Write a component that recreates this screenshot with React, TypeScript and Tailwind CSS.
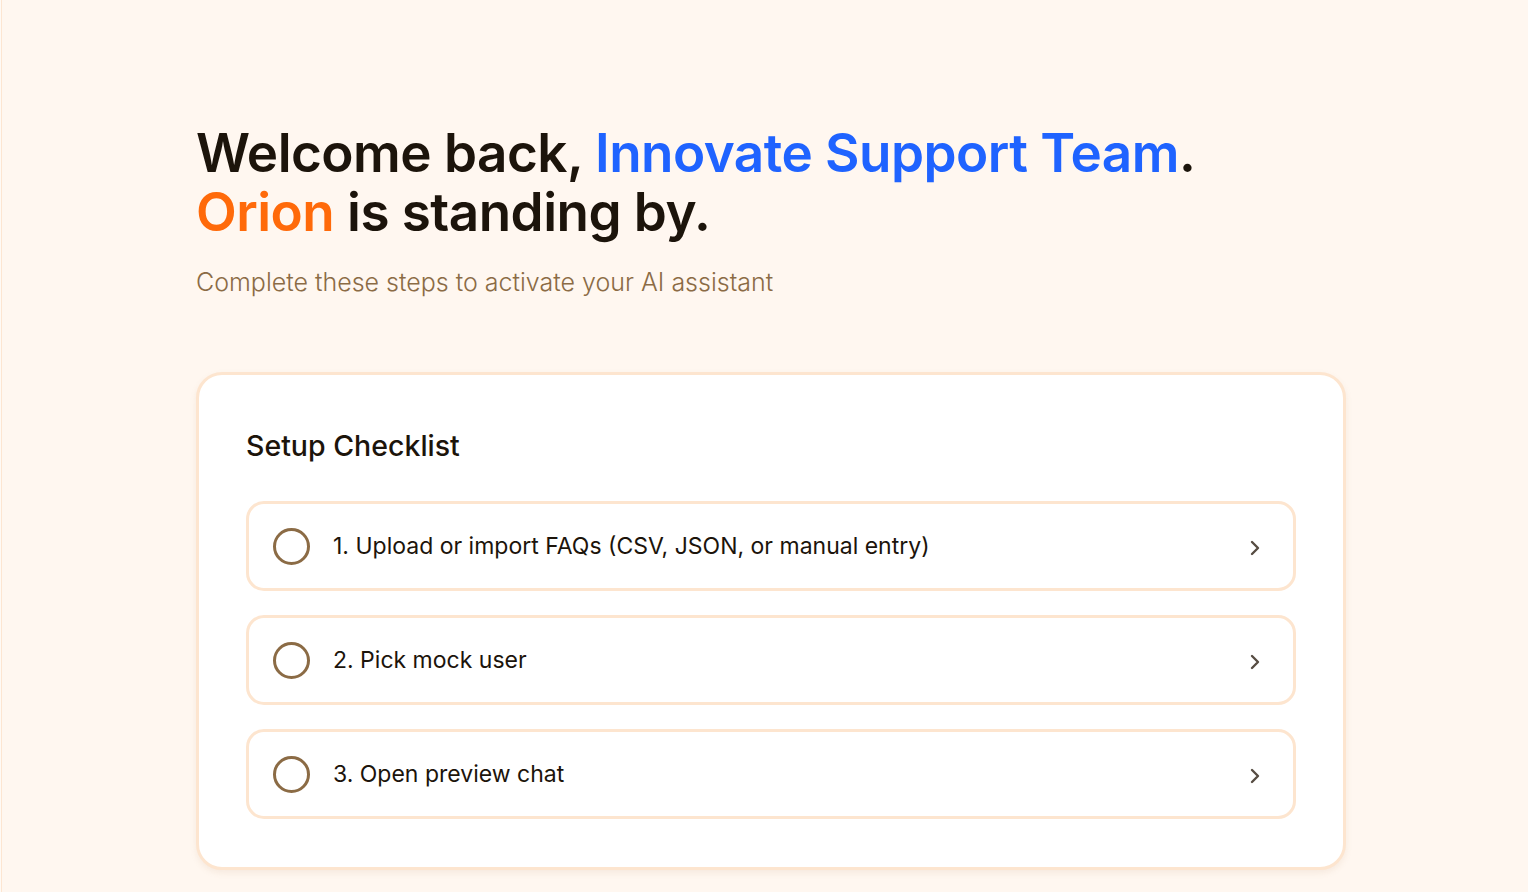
import { ChevronRight } from "lucide-react";

const steps = [
  "1. Upload or import FAQs (CSV, JSON, or manual entry)",
  "2. Pick mock user",
  "3. Open preview chat",
];

export default function App() {
  return (
    <div
      className="flex min-h-screen bg-[#fff7f0]"
      style={{ fontFamily: "Inter, 'Noto Sans', sans-serif" }}
    >
      <div className="w-[2px] shrink-0 bg-[#fffaf5] border-r border-[#fde6d2]" />
      <main className="flex-1 pl-[194px] pr-[180px] pt-[124px]">
        <h1 className="text-[53px] leading-[59px] font-semibold tracking-[-0.01em] text-[#1c140b]">
          Welcome back, <span className="text-[#1f63ff]">Innovate Support Team</span>.
          <br />
          <span className="text-[#ff6a0a]">Orion</span> is standing by.
        </h1>
        <p className="mt-[22px] text-[25px] font-light text-[#8b6b45]">
          Complete these steps to activate your AI assistant
        </p>

        <section className="mt-[70px] w-[1150px] rounded-[26px] border-[3px] border-[#fde5cf] bg-white px-[47px] pt-[50px] pb-[48px] shadow-[0_3px_6px_rgba(180,140,100,0.12)]">
          <h2 className="text-[28.5px] font-medium text-[#1c140b]">Setup Checklist</h2>
          <div className="mt-[34px] flex flex-col gap-[24px]">
            {steps.map((s) => (
              <button
                key={s}
                className="flex h-[90px] items-center rounded-[18px] border-[3px] border-[#fde5cf] bg-white pl-[24px] pr-[26px] text-left"
              >
                <span className="h-[37px] w-[37px] shrink-0 rounded-full border-[3px] border-[#8b6b45]" />
                <span className="ml-[23px] flex-1 text-[23px] text-[#1c140b]">{s}</span>
                <ChevronRight className="mt-[3px] h-[24px] w-[24px] text-[#574d43]" strokeWidth={2.4} />
              </button>
            ))}
          </div>
        </section>
      </main>
    </div>
  );
}
